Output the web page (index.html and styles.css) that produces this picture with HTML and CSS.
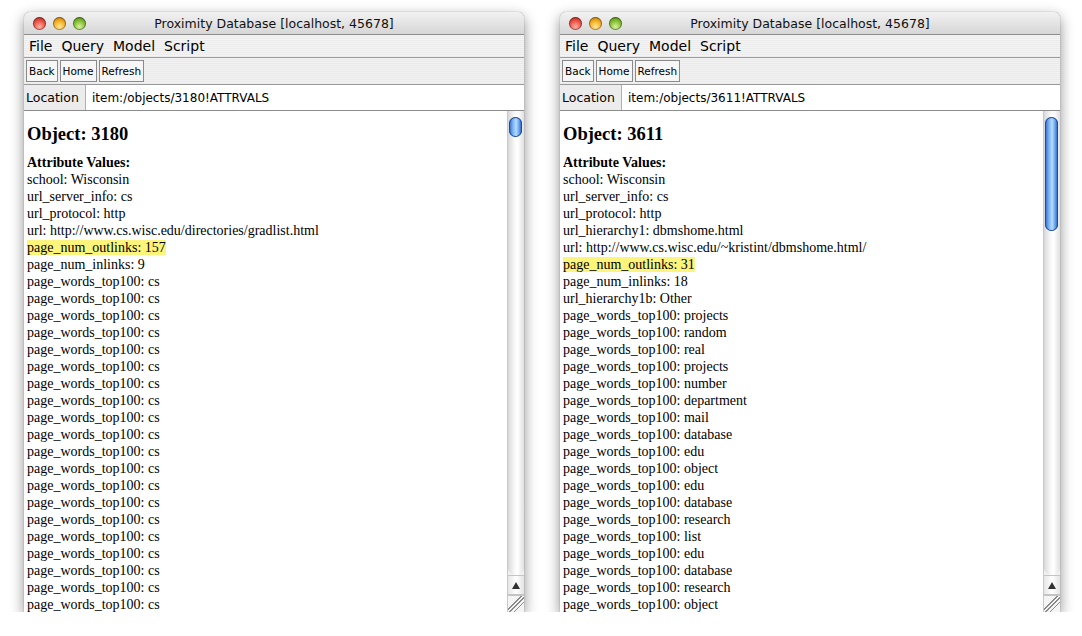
FILE: index.html
```html
<!DOCTYPE html>
<html>
<head>
<meta charset="utf-8">
<title>Proximity Database</title>
<link rel="stylesheet" href="styles.css">
</head>
<body>
<div class="desk">
  <div class="window">
    <div class="titlebar">
      <div class="lights"><span class="light red"></span><span class="light yellow"></span><span class="light green"></span></div>
      <div class="title">Proximity Database [localhost, 45678]</div>
    </div>
    <div class="menubar"><span>File</span><span>Query</span><span>Model</span><span>Script</span></div>
    <div class="toolbar"><button class="btn">Back</button><button class="btn">Home</button><button class="btn">Refresh</button></div>
    <div class="locrow"><span class="loclabel">Location</span><div class="locfield">item:/objects/3180!ATTRVALS</div></div>
    <div class="content">
      <div class="page">
        <div class="heading">Object: 3180</div>
        <div class="sub">Attribute Values:</div>
        <div class="line">school: Wisconsin</div>
        <div class="line">url_server_info: cs</div>
        <div class="line">url_protocol: http</div>
        <div class="line">url: http://www.cs.wisc.edu/directories/gradlist.html</div>
        <div class="line"><span class="hl">page_num_outlinks: 157</span></div>
        <div class="line">page_num_inlinks: 9</div>
        <div class="line">page_words_top100: cs</div>
        <div class="line">page_words_top100: cs</div>
        <div class="line">page_words_top100: cs</div>
        <div class="line">page_words_top100: cs</div>
        <div class="line">page_words_top100: cs</div>
        <div class="line">page_words_top100: cs</div>
        <div class="line">page_words_top100: cs</div>
        <div class="line">page_words_top100: cs</div>
        <div class="line">page_words_top100: cs</div>
        <div class="line">page_words_top100: cs</div>
        <div class="line">page_words_top100: cs</div>
        <div class="line">page_words_top100: cs</div>
        <div class="line">page_words_top100: cs</div>
        <div class="line">page_words_top100: cs</div>
        <div class="line">page_words_top100: cs</div>
        <div class="line">page_words_top100: cs</div>
        <div class="line">page_words_top100: cs</div>
        <div class="line">page_words_top100: cs</div>
        <div class="line">page_words_top100: cs</div>
        <div class="line">page_words_top100: cs</div>
      </div>
      <div class="scrollbar">
        <div class="track"><div class="thumb short"></div></div>
        <div class="arrow"><span class="tri"></span></div>
        <div class="grip"></div>
      </div>
    </div>
  </div>

  <div class="window">
    <div class="titlebar">
      <div class="lights"><span class="light red"></span><span class="light yellow"></span><span class="light green"></span></div>
      <div class="title">Proximity Database [localhost, 45678]</div>
    </div>
    <div class="menubar"><span>File</span><span>Query</span><span>Model</span><span>Script</span></div>
    <div class="toolbar"><button class="btn">Back</button><button class="btn">Home</button><button class="btn">Refresh</button></div>
    <div class="locrow"><span class="loclabel">Location</span><div class="locfield">item:/objects/3611!ATTRVALS</div></div>
    <div class="content">
      <div class="page">
        <div class="heading">Object: 3611</div>
        <div class="sub">Attribute Values:</div>
        <div class="line">school: Wisconsin</div>
        <div class="line">url_server_info: cs</div>
        <div class="line">url_protocol: http</div>
        <div class="line">url_hierarchy1: dbmshome.html</div>
        <div class="line">url: http://www.cs.wisc.edu/~kristint/dbmshome.html/</div>
        <div class="line"><span class="hl">page_num_outlinks: 31</span></div>
        <div class="line">page_num_inlinks: 18</div>
        <div class="line">url_hierarchy1b: Other</div>
        <div class="line">page_words_top100: projects</div>
        <div class="line">page_words_top100: random</div>
        <div class="line">page_words_top100: real</div>
        <div class="line">page_words_top100: projects</div>
        <div class="line">page_words_top100: number</div>
        <div class="line">page_words_top100: department</div>
        <div class="line">page_words_top100: mail</div>
        <div class="line">page_words_top100: database</div>
        <div class="line">page_words_top100: edu</div>
        <div class="line">page_words_top100: object</div>
        <div class="line">page_words_top100: edu</div>
        <div class="line">page_words_top100: database</div>
        <div class="line">page_words_top100: research</div>
        <div class="line">page_words_top100: list</div>
        <div class="line">page_words_top100: edu</div>
        <div class="line">page_words_top100: database</div>
        <div class="line">page_words_top100: research</div>
        <div class="line">page_words_top100: object</div>
      </div>
      <div class="scrollbar">
        <div class="track"><div class="thumb long"></div></div>
        <div class="arrow"><span class="tri"></span></div>
        <div class="grip"></div>
      </div>
    </div>
  </div>
</div>
</body>
</html>
```

FILE: styles.css
```css
html, body {
  margin: 0;
  padding: 0;
  background: #ffffff;
}

.desk {
  display: flex;
  gap: 36px;
  padding: 12px 0 0 24px;
}

.window {
  width: 500px;
  height: 600px;
  display: flex;
  flex-direction: column;
  background: #ececec;
  border-radius: 6px 6px 0 0;
  box-shadow: 0 5px 14px rgba(0, 0, 0, 0.45), 0 0 1px rgba(0, 0, 0, 0.5);
  font-family: "DejaVu Sans", "Liberation Sans", sans-serif;
  color: #000;
  overflow: hidden;
}

.titlebar {
  height: 22px;
  flex: none;
  display: flex;
  align-items: center;
  position: relative;
  background: linear-gradient(#f2f2f2, #d6d6d6);
  border-bottom: 1px solid #8c8c8c;
  border-radius: 6px 6px 0 0;
}

.lights {
  display: flex;
  gap: 7px;
  padding-left: 9px;
}

.light {
  width: 13px;
  height: 13px;
  border-radius: 50%;
  box-shadow: inset 0 0 0 1px rgba(0, 0, 0, 0.35);
}

.light.red {
  background: radial-gradient(circle at 50% 75%, #ffb2a8 0%, #ef5a4d 45%, #a8180e 100%);
}

.light.yellow {
  background: radial-gradient(circle at 50% 75%, #ffe9a0 0%, #f6b42a 45%, #b26b00 100%);
}

.light.green {
  background: radial-gradient(circle at 50% 75%, #d8f0a0 0%, #8cc43a 45%, #3f7a0a 100%);
}

.title {
  position: absolute;
  left: 0;
  right: 0;
  text-align: center;
  font-size: 12.5px;
  color: #111;
  pointer-events: none;
}

.menubar {
  height: 22px;
  flex: none;
  display: flex;
  align-items: center;
  gap: 9px;
  padding-left: 5px;
  font-size: 14px;
  background: repeating-linear-gradient(#f4f4f4 0 1px, #ececec 1px 2px);
  border-bottom: 1px solid #9a9a9a;
}

.toolbar {
  height: 26px;
  flex: none;
  display: flex;
  align-items: center;
  gap: 2px;
  padding-left: 2px;
  background: repeating-linear-gradient(#f2f2f2 0 1px, #eaeaea 1px 2px);
  border-bottom: 1px solid #9a9a9a;
}

.btn {
  height: 22px;
  padding: 0 2px;
  border: 1px solid #8a8a8a;
  background: #f6f6f6;
  font-family: "DejaVu Sans", "Liberation Sans", sans-serif;
  font-size: 10.5px;
  color: #000;
  margin: 0;
}

.locrow {
  height: 25px;
  flex: none;
  display: flex;
  align-items: stretch;
  background: #ececec;
}

.loclabel {
  width: 59px;
  flex: none;
  display: flex;
  align-items: center;
  padding-left: 2px;
  font-size: 12.5px;
}

.locfield {
  flex: 1;
  display: flex;
  align-items: center;
  padding-left: 6px;
  background: #fff;
  border-left: 1px solid #b0b0b0;
  font-size: 12px;
}

.content {
  flex: 1;
  min-height: 0;
  display: flex;
  background: #fff;
  border-top: 1px solid #8c8c8c;
}

.page {
  flex: 1;
  overflow: hidden;
  padding: 11px 0 0 3px;
  font-family: "Liberation Serif", "Times New Roman", serif;
  font-size: 14px;
}

.heading {
  font-size: 18.5px;
  font-weight: bold;
  line-height: 24px;
  margin-bottom: 8px;
}

.sub {
  font-weight: bold;
  line-height: 17px;
}

.line {
  line-height: 17px;
  white-space: nowrap;
}

.hl {
  background: #fdf47c;
}

.scrollbar {
  width: 16px;
  flex: none;
  display: flex;
  flex-direction: column;
  background: #f2f2f2;
  border-left: 1px solid #c8c8c8;
}

.track {
  flex: 1;
  padding: 6px 1px 0 1px;
  background: linear-gradient(90deg, #d8d8d8, #f8f8f8 40%, #ffffff 60%, #e0e0e0);
  border-radius: 0 0 7px 7px;
}

.thumb {
  width: 13px;
  border-radius: 7px;
  background: linear-gradient(90deg, #2a5fc8, #7ab4f2 30%, #b7dcff 55%, #5d9ce8 80%, #2452b4);
  box-shadow: inset 0 0 0 1px #1f4aa0;
}

.thumb.short {
  height: 20px;
}

.thumb.long {
  height: 114px;
}

.arrow {
  height: 18px;
  flex: none;
  display: flex;
  align-items: center;
  justify-content: center;
  background: linear-gradient(90deg, #e6e6e6, #ffffff 50%, #e4e4e4);
  border-top: 1px solid #c4c4c4;
  border-bottom: 1px solid #c4c4c4;
}

.tri {
  width: 0;
  height: 0;
  border-left: 4px solid transparent;
  border-right: 4px solid transparent;
  border-bottom: 7px solid #333;
}

.grip {
  height: 16px;
  flex: none;
  background:
    linear-gradient(135deg, transparent 9px, #8a8a8a 9px 10px, transparent 10px 12px, #8a8a8a 12px 13px, transparent 13px 15px, #8a8a8a 15px 16px, transparent 16px),
    #f4f4f4;
  border-top: 1px solid #c4c4c4;
}
```
